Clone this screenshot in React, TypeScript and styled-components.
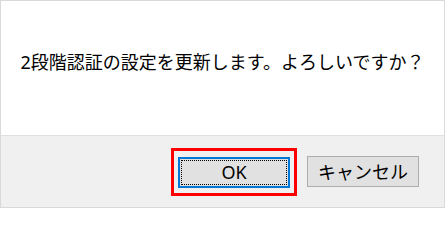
import React from 'react';
import styled, { createGlobalStyle } from 'styled-components';

const GlobalStyle = createGlobalStyle({
  'html, body': {
    margin: 0,
    padding: 0,
    background: '#ffffff',
  },
  body: {
    fontFamily: '"Noto Sans", "Noto Sans CJK JP", sans-serif',
  },
});

const Dialog = styled.div({
  width: 445,
  height: 208,
  boxSizing: 'border-box',
  border: '1px solid #d9d9d9',
  display: 'flex',
  flexDirection: 'column',
  background: '#ffffff',
});

const Body = styled.div({
  height: 134,
  display: 'flex',
  alignItems: 'center',
  justifyContent: 'center',
  paddingBottom: 14,
  boxSizing: 'border-box',
});

const Message = styled.p({
  margin: 0,
  fontSize: 18,
  letterSpacing: 0,
  color: '#000000',
  whiteSpace: 'nowrap',
});

const Footer = styled.div({
  flex: 1,
  borderTop: '1px solid #dfdfdf',
  background: '#f0f0f0',
  display: 'flex',
  alignItems: 'center',
  justifyContent: 'flex-end',
  gap: 10,
  paddingRight: 25,
});

const Highlight = styled.div({
  border: '3px solid #ff0000',
  padding: '6px 4px 5px 4px',
  display: 'flex',
});

const Button = styled.button<{ $focused?: boolean }>`
  position: relative;
  width: 112px;
  height: 31px;
  box-sizing: border-box;
  margin: 0;
  padding: 0;
  background: #e1e1e1;
  border: ${(p) => (p.$focused ? '2px solid #0078d7' : '1px solid #adadad')};
  font-family: "Noto Sans", "Noto Sans CJK JP", sans-serif;
  font-size: 18px;
  line-height: 1;
  color: #000000;
  display: flex;
  align-items: center;
  justify-content: center;

  &::after {
    content: '';
    display: ${(p) => (p.$focused ? 'block' : 'none')};
    position: absolute;
    inset: 1px;
    border: 1px dotted #000000;
  }
`;

const App = () => {
  return (
    <>
      <GlobalStyle />
      <Dialog>
        <Body>
          <Message>2段階認証の設定を更新します。よろしいですか？</Message>
        </Body>
        <Footer>
          <Highlight>
            <Button $focused>OK</Button>
          </Highlight>
          <Button>キャンセル</Button>
        </Footer>
      </Dialog>
    </>
  );
};

export default App;
